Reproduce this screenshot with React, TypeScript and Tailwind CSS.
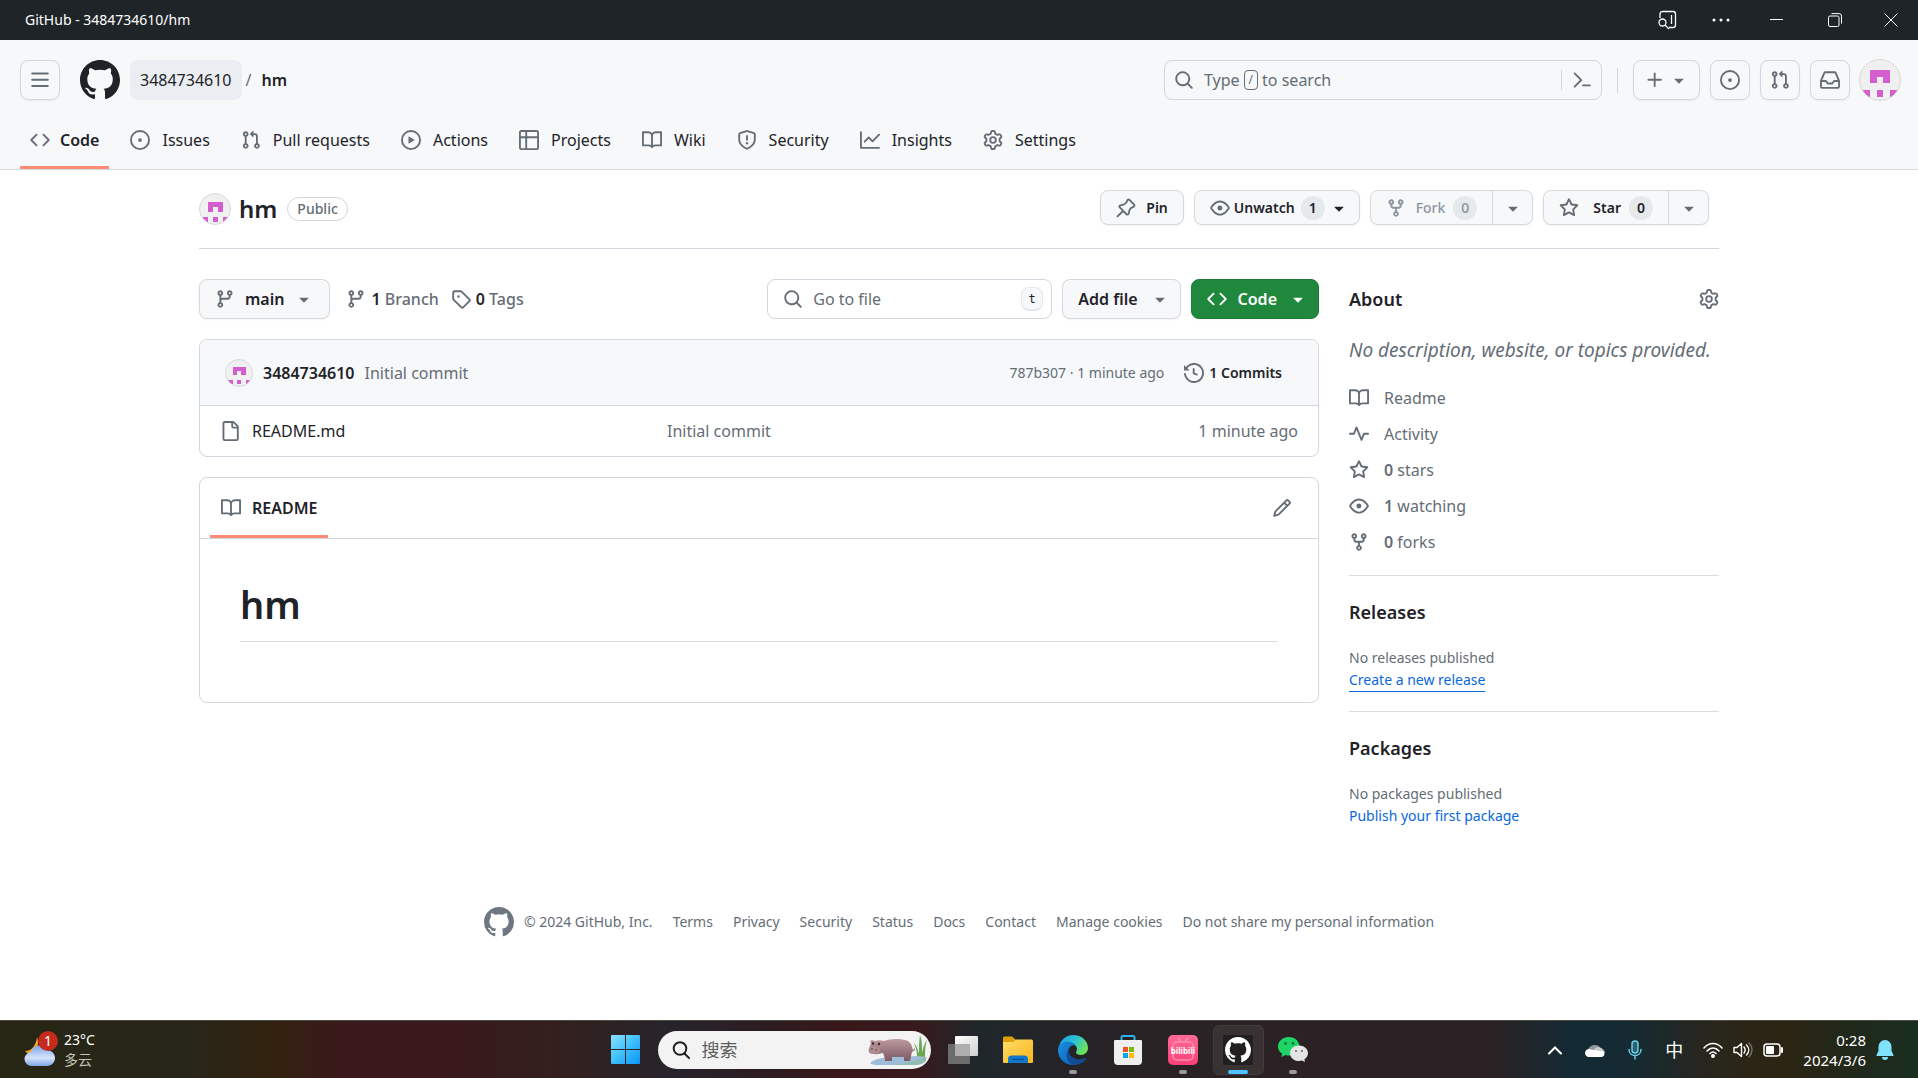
import type { ReactNode } from "react";

// 16px icon set, every path drawn on a 16x16 grid
const ICONS = {
  bars: "M1 2.75A.75.75 0 0 1 1.75 2h12.5a.75.75 0 0 1 0 1.5H1.75A.75.75 0 0 1 1 2.75Zm0 5A.75.75 0 0 1 1.75 7h12.5a.75.75 0 0 1 0 1.5H1.75A.75.75 0 0 1 1 7.75ZM1.75 12h12.5a.75.75 0 0 1 0 1.5H1.75a.75.75 0 0 1 0-1.5Z",
  github:
    "M8 0c4.42 0 8 3.58 8 8a8.013 8.013 0 0 1-5.45 7.59c-.4.08-.55-.17-.55-.38 0-.27.01-1.13.01-2.2 0-.75-.25-1.23-.54-1.48 1.78-.2 3.65-.88 3.65-3.95 0-.88-.31-1.59-.82-2.15.08-.2.36-1.02-.08-2.12 0 0-.67-.22-2.2.82-.64-.18-1.32-.27-2-.27-.68 0-1.36.09-2 .27-1.53-1.03-2.2-.82-2.2-.82-.44 1.1-.16 1.92-.08 2.12-.51.56-.82 1.28-.82 2.15 0 3.06 1.86 3.75 3.64 3.95-.23.2-.44.55-.51 1.07-.46.21-1.61.55-2.33-.66-.15-.24-.6-.83-1.23-.82-.67.01-.27.38.01.53.34.19.73.9.82 1.13.16.45.68 1.31 2.69.94 0 .67.01 1.3.01 1.49 0 .21-.15.45-.55.38A7.995 7.995 0 0 1 0 8c0-4.42 3.58-8 8-8Z",
  code: "m11.28 3.22 4.25 4.25a.75.75 0 0 1 0 1.06l-4.25 4.25a.749.749 0 0 1-1.275-.326.749.749 0 0 1 .215-.734L13.94 8l-3.72-3.72a.749.749 0 0 1 .326-1.275.749.749 0 0 1 .734.215Zm-6.56 0a.751.751 0 0 1 1.042.018.751.751 0 0 1 .018 1.042L2.06 8l3.72 3.72a.749.749 0 0 1-.326 1.275.749.749 0 0 1-.734-.215L.47 8.53a.75.75 0 0 1 0-1.06Z",
  issue:
    "M8 9.5a1.5 1.5 0 1 0 0-3 1.5 1.5 0 0 0 0 3ZM8 0a8 8 0 1 1 0 16A8 8 0 0 1 8 0ZM1.5 8a6.5 6.5 0 1 0 13 0 6.5 6.5 0 0 0-13 0Z",
  pull: "M1.5 3.25a2.25 2.25 0 1 1 3 2.122v5.256a2.251 2.251 0 1 1-1.5 0V5.372A2.25 2.25 0 0 1 1.5 3.25Zm5.677-.177L9.573.677A.25.25 0 0 1 10 .854V2.5h1A2.5 2.5 0 0 1 13.5 5v5.628a2.251 2.251 0 1 1-1.5 0V5a1 1 0 0 0-1-1h-1v1.646a.25.25 0 0 1-.427.177L7.177 3.427a.25.25 0 0 1 0-.354ZM3.75 2.5a.75.75 0 1 0 0 1.5.75.75 0 0 0 0-1.5Zm0 9.5a.75.75 0 1 0 0 1.5.75.75 0 0 0 0-1.5Zm8.25.75a.75.75 0 1 0 1.5 0 .75.75 0 0 0-1.5 0Z",
  play: "M8 0a8 8 0 1 1 0 16A8 8 0 0 1 8 0ZM1.5 8a6.5 6.5 0 1 0 13 0 6.5 6.5 0 0 0-13 0Zm4.879-2.773 4.264 2.559a.25.25 0 0 1 0 .428l-4.264 2.559A.25.25 0 0 1 6 10.559V5.442a.25.25 0 0 1 .379-.215Z",
  table:
    "M0 1.75C0 .784.784 0 1.75 0h12.5C15.216 0 16 .784 16 1.75v12.5A1.75 1.75 0 0 1 14.25 16H1.75A1.75 1.75 0 0 1 0 14.25ZM6.5 6.5v8h7.75a.25.25 0 0 0 .25-.25V6.5Zm8-1.5V1.75a.25.25 0 0 0-.25-.25H6.5V5Zm-13 1.5v7.75c0 .138.112.25.25.25H5v-8ZM5 5V1.5H1.75a.25.25 0 0 0-.25.25V5Z",
  book: "M0 1.75A.75.75 0 0 1 .75 1h4.253c1.227 0 2.317.59 3 1.501A3.743 3.743 0 0 1 11.006 1h4.245a.75.75 0 0 1 .75.75v10.5a.75.75 0 0 1-.75.75h-4.507a2.25 2.25 0 0 0-1.591.659l-.622.621a.75.75 0 0 1-1.06 0l-.622-.621A2.25 2.25 0 0 0 5.258 13H.75a.75.75 0 0 1-.75-.75Zm7.251 10.324.004-5.073-.002-2.253A2.25 2.25 0 0 0 5.003 2.5H1.5v9h3.757a3.75 3.75 0 0 1 1.994.574ZM8.755 4.75l-.004 7.322a3.752 3.752 0 0 1 1.992-.572H14.5v-9h-3.495a2.25 2.25 0 0 0-2.25 2.25Z",
  shield:
    "M7.467.133a1.748 1.748 0 0 1 1.066 0l5.25 1.68A1.75 1.75 0 0 1 15 3.48V7c0 1.566-.32 3.182-1.303 4.682-.983 1.498-2.585 2.813-5.032 3.855a1.697 1.697 0 0 1-1.33 0c-2.447-1.042-4.049-2.357-5.032-3.855C1.32 10.182 1 8.566 1 7V3.48a1.75 1.75 0 0 1 1.217-1.667Zm.61 1.429a.25.25 0 0 0-.153 0l-5.25 1.68a.25.25 0 0 0-.174.238V7c0 1.358.275 2.666 1.057 3.86.784 1.194 2.121 2.34 4.366 3.297a.196.196 0 0 0 .154 0c2.245-.956 3.582-2.104 4.366-3.298C13.225 9.666 13.5 8.36 13.5 7V3.48a.251.251 0 0 0-.174-.237l-5.25-1.68ZM8.75 4.75v3a.75.75 0 0 1-1.5 0v-3a.75.75 0 0 1 1.5 0ZM9 10.5a1 1 0 1 1-2 0 1 1 0 0 1 2 0Z",
  graph:
    "M1.5 1.75V13.5h13.75a.75.75 0 0 1 0 1.5H.75a.75.75 0 0 1-.75-.75V1.75a.75.75 0 0 1 1.5 0Zm14.28 2.53-5.25 5.25a.75.75 0 0 1-1.06 0L7 7.06 4.28 9.78a.751.751 0 0 1-1.042-.018.751.751 0 0 1-.018-1.042l3.25-3.25a.75.75 0 0 1 1.06 0L10 7.94l4.72-4.72a.751.751 0 0 1 1.042.018.751.751 0 0 1 .018 1.042Z",
  gear: "M8 0a8.2 8.2 0 0 1 .701.031C9.444.095 9.99.645 10.16 1.29l.288 1.107c.018.066.079.158.212.224.231.114.454.243.668.386.123.082.233.09.299.071l1.103-.303c.644-.176 1.392.021 1.82.63.27.385.506.792.704 1.218.315.675.111 1.422-.364 1.891l-.814.806c-.049.048-.098.147-.088.294.016.257.016.515 0 .772-.01.147.038.246.088.294l.814.806c.475.469.679 1.216.364 1.891a7.977 7.977 0 0 1-.704 1.217c-.428.61-1.176.807-1.82.63l-1.102-.302c-.067-.019-.177-.011-.3.071a5.909 5.909 0 0 1-.668.386c-.133.066-.194.158-.211.224l-.29 1.106c-.168.646-.715 1.196-1.458 1.26a8.006 8.006 0 0 1-1.402 0c-.743-.064-1.289-.614-1.458-1.26l-.289-1.106c-.018-.066-.079-.158-.212-.224a5.738 5.738 0 0 1-.668-.386c-.123-.082-.233-.09-.299-.071l-1.103.303c-.644.176-1.392-.021-1.82-.63a8.12 8.12 0 0 1-.704-1.218c-.315-.675-.111-1.422.363-1.891l.815-.806c.05-.048.098-.147.088-.294a6.214 6.214 0 0 1 0-.772c.01-.147-.038-.246-.088-.294l-.815-.806C.635 6.045.431 5.298.746 4.623a7.92 7.92 0 0 1 .704-1.217c.428-.61 1.176-.807 1.82-.63l1.102.302c.067.019.177.011.3-.071.214-.143.437-.272.668-.386.133-.066.194-.158.211-.224l.29-1.106C6.009.645 6.556.095 7.299.03 7.53.01 7.764 0 8 0Zm-.571 1.525c-.036.003-.108.036-.137.146l-.289 1.105c-.147.561-.549.967-.998 1.189-.173.086-.34.183-.5.29-.417.278-.97.423-1.529.27l-1.103-.303c-.109-.03-.175.016-.195.045-.22.312-.412.644-.573.99-.014.031-.021.11.059.19l.815.806c.411.406.562.957.53 1.456a4.709 4.709 0 0 0 0 .582c.032.499-.119 1.05-.53 1.456l-.815.806c-.081.08-.073.159-.059.19.162.346.353.677.573.989.02.03.085.076.195.046l1.102-.303c.56-.153 1.113-.008 1.53.27.161.107.328.204.501.29.447.222.85.629.997 1.189l.289 1.105c.029.109.101.143.137.146a6.6 6.6 0 0 0 1.142 0c.036-.003.108-.036.137-.146l.289-1.105c.147-.561.549-.967.998-1.189.173-.086.34-.183.5-.29.417-.278.97-.423 1.529-.27l1.103.303c.109.029.175-.016.195-.045.22-.313.411-.644.573-.99.014-.031.021-.11-.059-.19l-.815-.806c-.411-.406-.562-.957-.53-1.456a4.709 4.709 0 0 0 0-.582c-.032-.499.119-1.05.53-1.456l.815-.806c.081-.08.073-.159.059-.19a6.464 6.464 0 0 0-.573-.989c-.02-.03-.085-.076-.195-.046l-1.102.303c-.56.153-1.113.008-1.53-.27a4.44 4.44 0 0 0-.501-.29c-.447-.222-.85-.629-.997-1.189l-.289-1.105c-.029-.11-.101-.143-.137-.146a6.6 6.6 0 0 0-1.142 0ZM11 8a3 3 0 1 1-6 0 3 3 0 0 1 6 0ZM9.5 8a1.5 1.5 0 1 0-3.001.001A1.5 1.5 0 0 0 9.5 8Z",
  search:
    "M10.68 11.74a6 6 0 0 1-7.922-8.982 6 6 0 0 1 8.982 7.922l3.04 3.04a.749.749 0 0 1-.326 1.275.749.749 0 0 1-.734-.215ZM11.5 7a4.499 4.499 0 1 0-8.997 0A4.499 4.499 0 0 0 11.5 7Z",
  caret: "m4.427 7.427 3.396 3.396a.25.25 0 0 0 .354 0l3.396-3.396A.25.25 0 0 0 11.396 7H4.604a.25.25 0 0 0-.177.427Z",
  plus: "M7.75 2a.75.75 0 0 1 .75.75V7h4.25a.75.75 0 0 1 0 1.5H8.5v4.25a.75.75 0 0 1-1.5 0V8.5H2.75a.75.75 0 0 1 0-1.5H7V2.75A.75.75 0 0 1 7.75 2Z",
  inbox:
    "M2.8 2.06A1.75 1.75 0 0 1 4.41 1h7.18c.7 0 1.333.417 1.61 1.06l2.74 6.395c.04.093.06.194.06.295v4.5A1.75 1.75 0 0 1 14.25 15H1.75A1.75 1.75 0 0 1 0 13.25v-4.5c0-.101.02-.202.06-.295Zm1.61.44a.25.25 0 0 0-.23.152L1.887 8H4.75a.75.75 0 0 1 .6.3L6.625 10h2.75l1.275-1.7a.75.75 0 0 1 .6-.3h2.863L11.82 2.652a.25.25 0 0 0-.23-.152Zm10.09 7h-2.875l-1.275 1.7a.75.75 0 0 1-.6.3h-3.5a.75.75 0 0 1-.6-.3L4.375 9.5H1.5v3.75c0 .138.112.25.25.25h12.5a.25.25 0 0 0 .25-.25Z",
  command:
    "m6.354 8.04-4.773 4.773a.75.75 0 1 0 1.061 1.06L7.945 8.57a.75.75 0 0 0 0-1.06L2.642 2.206a.75.75 0 0 0-1.06 1.061L6.353 8.04ZM8.75 11.5a.75.75 0 0 0 0 1.5h5.5a.75.75 0 0 0 0-1.5h-5.5Z",
  pin: "m11.294.984 3.722 3.722a1.75 1.75 0 0 1-.504 2.826l-1.327.613a3.089 3.089 0 0 0-1.707 2.084l-.584 2.454c-.317 1.332-1.972 1.8-2.94.832L5.75 11.311 1.78 15.28a.749.749 0 1 1-1.06-1.06l3.969-3.97-2.204-2.204c-.968-.968-.5-2.623.832-2.94l2.454-.584a3.08 3.08 0 0 0 2.084-1.707l.613-1.327a1.75 1.75 0 0 1 2.826-.504ZM6.283 9.723l2.732 2.731a.25.25 0 0 0 .42-.119l.584-2.454a4.586 4.586 0 0 1 2.537-3.098l1.328-.613a.25.25 0 0 0 .072-.404l-3.722-3.722a.25.25 0 0 0-.404.072l-.613 1.328a4.584 4.584 0 0 1-3.098 2.537l-2.454.584a.25.25 0 0 0-.119.42l2.731 2.732Z",
  eye: "M8 2c1.981 0 3.671.992 4.933 2.078 1.27 1.091 2.187 2.345 2.637 3.023a1.62 1.62 0 0 1 0 1.798c-.45.678-1.367 1.932-2.637 3.023C11.67 13.008 9.981 14 8 14c-1.981 0-3.671-.992-4.933-2.078C1.797 10.83.88 9.576.43 8.898a1.62 1.62 0 0 1 0-1.798c.45-.677 1.367-1.931 2.637-3.022C4.33 2.992 6.019 2 8 2ZM1.679 7.932a.12.12 0 0 0 0 .136c.411.622 1.241 1.75 2.366 2.717C5.176 11.758 6.527 12.5 8 12.5c1.473 0 2.825-.742 3.955-1.715 1.124-.967 1.954-2.096 2.366-2.717a.12.12 0 0 0 0-.136c-.412-.621-1.242-1.75-2.366-2.717C10.824 4.242 9.473 3.5 8 3.5c-1.473 0-2.825.742-3.955 1.715-1.124.967-1.954 2.096-2.366 2.717ZM8 10a2 2 0 1 1-.001-3.999A2 2 0 0 1 8 10Z",
  fork: "M5 5.372v.878c0 .414.336.75.75.75h4.5a.75.75 0 0 0 .75-.75v-.878a2.25 2.25 0 1 1 1.5 0v.878a2.25 2.25 0 0 1-2.25 2.25h-1.5v2.128a2.251 2.251 0 1 1-1.5 0V8.5h-1.5A2.25 2.25 0 0 1 3.5 6.25v-.878a2.25 2.25 0 1 1 1.5 0ZM5 3.25a.75.75 0 1 0-1.5 0 .75.75 0 0 0 1.5 0Zm6.75.75a.75.75 0 1 0 0-1.5.75.75 0 0 0 0 1.5Zm-3 8.75a.75.75 0 1 0-1.5 0 .75.75 0 0 0 1.5 0Z",
  star: "M8 .25a.75.75 0 0 1 .673.418l1.882 3.815 4.21.612a.75.75 0 0 1 .416 1.279l-3.046 2.97.719 4.192a.751.751 0 0 1-1.088.791L8 12.347l-3.766 1.98a.75.75 0 0 1-1.088-.79l.72-4.194L.818 6.374a.75.75 0 0 1 .416-1.28l4.21-.611L7.327.668A.75.75 0 0 1 8 .25Zm0 2.445L6.615 5.5a.75.75 0 0 1-.564.41l-3.097.45 2.24 2.184a.75.75 0 0 1 .216.664l-.528 3.084 2.769-1.456a.75.75 0 0 1 .698 0l2.77 1.456-.53-3.084a.75.75 0 0 1 .216-.664l2.24-2.183-3.096-.45a.75.75 0 0 1-.564-.41L8 2.694Z",
  branch:
    "M9.5 3.25a2.25 2.25 0 1 1 3 2.122V6A2.5 2.5 0 0 1 10 8.5H6a1 1 0 0 0-1 1v1.128a2.251 2.251 0 1 1-1.5 0V5.372a2.25 2.25 0 1 1 1.5 0v1.836A2.493 2.493 0 0 1 6 7h4a1 1 0 0 0 1-1v-.628A2.25 2.25 0 0 1 9.5 3.25Zm-6 0a.75.75 0 1 0 1.5 0 .75.75 0 0 0-1.5 0Zm8.25-.75a.75.75 0 1 0 0 1.5.75.75 0 0 0 0-1.5ZM4.25 12a.75.75 0 1 0 0 1.5.75.75 0 0 0 0-1.5Z",
  tag: "M1 7.775V2.75C1 1.784 1.784 1 2.75 1h5.025c.464 0 .91.184 1.238.513l6.25 6.25a1.75 1.75 0 0 1 0 2.474l-5.026 5.026a1.75 1.75 0 0 1-2.474 0l-6.25-6.25A1.752 1.752 0 0 1 1 7.775Zm1.5 0c0 .066.026.13.073.177l6.25 6.25a.25.25 0 0 0 .354 0l5.025-5.025a.25.25 0 0 0 0-.354l-6.25-6.25a.25.25 0 0 0-.177-.073H2.75a.25.25 0 0 0-.25.25ZM6 5a1 1 0 1 1 0 2 1 1 0 0 1 0-2Z",
  history:
    "m.427 1.927 1.215 1.215a8.002 8.002 0 1 1-1.6 5.685.75.75 0 1 1 1.493-.154 6.5 6.5 0 1 0 1.18-4.458l1.358 1.358A.25.25 0 0 1 3.896 6H.25A.25.25 0 0 1 0 5.75V2.104a.25.25 0 0 1 .427-.177ZM7.75 4a.75.75 0 0 1 .75.75v2.992l2.028.812a.75.75 0 0 1-.557 1.392l-2.5-1A.751.751 0 0 1 7 8.25v-3.5A.75.75 0 0 1 7.75 4Z",
  file: "M2 1.75C2 .784 2.784 0 3.75 0h6.586c.464 0 .909.184 1.237.513l2.914 2.914c.329.328.513.773.513 1.237v9.586A1.75 1.75 0 0 1 13.25 16h-9.5A1.75 1.75 0 0 1 2 14.25Zm1.75-.25a.25.25 0 0 0-.25.25v12.5c0 .138.112.25.25.25h9.5a.25.25 0 0 0 .25-.25V6h-2.75A1.75 1.75 0 0 1 9 4.25V1.5Zm6.75.062V4.25c0 .138.112.25.25.25h2.688l-.011-.013-2.914-2.914-.013-.011Z",
  pencil:
    "M11.013 1.427a1.75 1.75 0 0 1 2.474 0l1.086 1.086a1.75 1.75 0 0 1 0 2.474l-8.61 8.61c-.21.21-.47.364-.756.445l-3.251.93a.75.75 0 0 1-.927-.928l.929-3.25c.081-.286.235-.547.445-.758l8.61-8.61Zm.176 4.823L9.75 4.81l-6.286 6.287a.253.253 0 0 0-.064.108l-.558 1.953 1.953-.558a.253.253 0 0 0 .108-.064Zm1.238-3.763a.25.25 0 0 0-.354 0L10.811 3.75l1.439 1.44 1.263-1.263a.25.25 0 0 0 0-.354Z",
  pulse:
    "M6 2c.306 0 .582.187.696.471L10 10.731l1.304-3.26A.751.751 0 0 1 12 7h3.25a.75.75 0 0 1 0 1.5h-2.742l-1.812 4.528a.751.751 0 0 1-1.392 0L6 4.77 4.696 8.03A.75.75 0 0 1 4 8.5H.75a.75.75 0 0 1 0-1.5h2.742l1.812-4.529A.751.751 0 0 1 6 2Z",
};

type IconName = keyof typeof ICONS;

function Icon({ name, className = "size-5" }: { name: IconName; className?: string }) {
  return (
    <svg viewBox="0 0 16 16" fill="currentColor" aria-hidden="true" className={`shrink-0 ${className}`}>
      <path d={ICONS[name]} />
    </svg>
  );
}

function Avatar({ className }: { className: string }) {
  return (
    <svg
      viewBox="0 0 12 12"
      aria-hidden="true"
      className={`shrink-0 rounded-full border border-[#d8dade] bg-[#f0f0f0] ${className}`}
    >
      <path
        fill="#d25fcd"
        shapeRendering="crispEdges"
        d="M3 3h6v4H7V5H5v2H3zM1 9h2v2H1zM5 9h2v2H5zM9 9h2v2H9z"
      />
    </svg>
  );
}

const NAV: { icon: IconName; label: string }[] = [
  { icon: "code", label: "Code" },
  { icon: "issue", label: "Issues" },
  { icon: "pull", label: "Pull requests" },
  { icon: "play", label: "Actions" },
  { icon: "table", label: "Projects" },
  { icon: "book", label: "Wiki" },
  { icon: "shield", label: "Security" },
  { icon: "graph", label: "Insights" },
  { icon: "gear", label: "Settings" },
];

const FOOTER_LINKS = [
  "Terms",
  "Privacy",
  "Security",
  "Status",
  "Docs",
  "Contact",
  "Manage cookies",
  "Do not share my personal information",
];

export default function App() {
  return (
    <div className="flex min-h-screen flex-col bg-white font-['Noto_Sans','Noto_Sans_CJK_SC',sans-serif] text-base text-[#1f2328]">
      <TitleBar />
      <Header />
      <main className="mx-auto w-full max-w-[1600px] px-10">
        <RepoTitle />
        <div className="mt-[30px] flex gap-[30px]">
          <div className="min-w-0 flex-1">
            <Toolbar />
            <FileList />
            <Readme />
          </div>
          <Sidebar />
        </div>
      </main>
      <footer className="mt-20 mb-16 flex items-center justify-center gap-5 text-sm text-[#656d76]">
        <div className="flex items-center gap-[10px]">
          <Icon name="github" className="size-[30px] text-[#6e7781]" />
          <span>© 2024 GitHub, Inc.</span>
        </div>
        {FOOTER_LINKS.map((link) => (
          <a key={link} href="#">
            {link}
          </a>
        ))}
      </footer>
      <Taskbar />
    </div>
  );
}

function TitleBar() {
  return (
    <div className="flex h-10 items-center justify-between bg-[#1f2428] pl-[25px] text-white">
      <span className="text-sm">GitHub - 3484734610/hm</span>
      <div className="flex items-center">
        <button aria-label="Search in page" className="flex w-[54px] justify-center">
          <svg viewBox="0 0 20 20" className="size-5" fill="none" stroke="currentColor" strokeWidth="1.3">
            <path d="M3 8V3.5A2.5 2.5 0 0 1 5.500 1.500H16A2.500 2.500 0 0 1 18.500 4v11A2.500 2.500 0 0 1 16 17.500h-4M14.500 5v9" />
            <circle cx="5.500" cy="12.500" r="3.500" />
            <path d="m8 15 4 4" />
          </svg>
        </button>
        <button aria-label="More" className="flex w-[54px] justify-center">
          <svg viewBox="0 0 20 20" className="size-5" fill="currentColor">
            <circle cx="3" cy="10" r="1.500" />
            <circle cx="10" cy="10" r="1.500" />
            <circle cx="17" cy="10" r="1.500" />
          </svg>
        </button>
        <button aria-label="Minimize" className="flex w-[58px] justify-center">
          <svg viewBox="0 0 14 14" className="size-[14px]" stroke="currentColor">
            <path d="M0 6.500h13" />
          </svg>
        </button>
        <button aria-label="Restore" className="flex w-[58px] justify-center">
          <svg viewBox="0 0 14 14" className="size-[14px]" fill="none" stroke="currentColor">
            <rect x="0.500" y="3" width="10.500" height="10.500" rx="1.500" />
            <path d="M3.500.600h7.500a2.500 2.500 0 0 1 2.500 2.500v7.500" />
          </svg>
        </button>
        <button aria-label="Close" className="flex w-[54px] justify-center">
          <svg viewBox="0 0 14 14" className="size-[14px]" stroke="currentColor">
            <path d="m.500.500 13 13M13.500.500l-13 13" />
          </svg>
        </button>
      </div>
    </div>
  );
}

function IconButton({ icon, label }: { icon: IconName; label: string }) {
  return (
    <button
      aria-label={label}
      className="flex size-10 items-center justify-center rounded-lg border border-[#d0d7de] text-[#656d76] shadow-xs"
    >
      <Icon name={icon} />
    </button>
  );
}

function Header() {
  return (
    <header className="border-b border-[#d4d9df] bg-[#f6f8fa]">
      <div className="flex items-center justify-between pt-[19px] pr-[17px] pl-5">
        <div className="flex items-center">
          <IconButton icon="bars" label="Open menu" />
          <a href="#" aria-label="Homepage" className="ml-5">
            <Icon name="github" className="size-10" />
          </a>
          <a href="#" className="ml-[10px] flex h-10 items-center rounded-lg bg-[#eaedf1] px-[10px]">
            3484734610
          </a>
          <span className="ml-1 text-[#656d76]">/</span>
          <a href="#" className="ml-[10px] font-semibold">
            hm
          </a>
        </div>
        <div className="flex items-center">
          <div className="flex h-10 w-[438px] items-center rounded-lg border border-[#d0d7de] pl-[9px] text-[#656d76]">
            <button className="flex flex-1 items-center gap-[10px]">
              <Icon name="search" />
              <span className="flex items-center gap-1">
                Type
                <kbd className="rounded border border-[#656d76] px-1 font-[inherit] text-xs leading-[18px]">/</kbd>
                to search
              </span>
            </button>
            <button aria-label="Command palette" className="flex h-5 w-10 items-center justify-center border-l border-[#d0d7de]">
              <Icon name="command" />
            </button>
          </div>
          <div className="mx-[15px] h-[25px] w-px bg-[#d0d7de]" />
          <button
            aria-label="Create new"
            className="mr-[10px] flex h-10 w-[67px] items-center justify-center gap-1 rounded-lg border border-[#d0d7de] text-[#656d76] shadow-xs"
          >
            <Icon name="plus" />
            <Icon name="caret" />
          </button>
          <div className="flex gap-[10px]">
            <IconButton icon="issue" label="Issues" />
            <IconButton icon="pull" label="Pull requests" />
            <IconButton icon="inbox" label="Notifications" />
          </div>
          <button aria-label="User menu" className="ml-[9px]">
            <Avatar className="size-[42px]" />
          </button>
        </div>
      </div>
      <nav className="flex gap-[11px] px-5 pt-3">
        {NAV.map((item, i) => (
          <a
            key={item.label}
            href="#"
            className={`flex h-14 items-center border-b-3 px-[10px] ${
              i === 0 ? "gap-[10px] border-[#fd8c73] font-semibold" : "gap-3 border-transparent"
            }`}
          >
            <Icon name={item.icon} className="size-5 text-[#656d76]" />
            {item.label}
          </a>
        ))}
      </nav>
    </header>
  );
}

function Counter({ children }: { children: ReactNode }) {
  return (
    <span className="flex h-6 min-w-6 items-center justify-center rounded-full bg-[#e6e9eb]">{children}</span>
  );
}

function RepoTitle() {
  const box = "flex h-[35px] items-center rounded-lg border border-[#d5d8dc] bg-[#f6f8fa] shadow-xs";
  return (
    <div className="flex items-start justify-between border-b border-[#d0d7de] pt-5 pr-[10px] pb-5">
      <div className="flex h-[38px] items-center">
        <Avatar className="size-8" />
        <h1 className="ml-2 text-2xl leading-8 font-semibold">hm</h1>
        <span className="ml-[10px] rounded-full border border-[#d0d7de] px-[9px] text-sm leading-[22px] font-medium text-[#656d76]">
          Public
        </span>
      </div>
      <div className="flex gap-[10px] text-sm font-semibold">
        <button className={`${box} gap-[10px] px-[15px]`}>
          <Icon name="pin" className="size-5 text-[#656d76]" />
          Pin
        </button>
        <button className={`${box} pr-[10px] pl-[15px]`}>
          <Icon name="eye" className="mr-1 size-5 text-[#656d76]" />
          <span className="mr-[6px]">Unwatch</span>
          <Counter>1</Counter>
          <Icon name="caret" className="ml-1 size-5" />
        </button>
        <div className={`${box} text-[#8c959f]`}>
          <button disabled className="flex items-center px-[15px] font-medium">
            <Icon name="fork" className="mr-[10px] size-5" />
            <span className="mr-2">Fork</span>
            <Counter>0</Counter>
          </button>
          <CaretCell label="Fork options" />
        </div>
        <div className={box}>
          <button className="flex items-center px-[15px]">
            <Icon name="star" className="mr-[14px] size-5 text-[#656d76]" />
            <span className="mr-2">Star</span>
            <Counter>0</Counter>
          </button>
          <CaretCell label="Star options" />
        </div>
      </div>
    </div>
  );
}

function CaretCell({ label }: { label: string }) {
  return (
    <button aria-label={label} className="flex h-full w-10 items-center justify-center border-l border-[#d5d8dc] text-[#656d76]">
      <Icon name="caret" />
    </button>
  );
}

function Toolbar() {
  return (
    <div className="flex h-10 items-center justify-between">
      <div className="flex items-center">
        <button className="flex h-10 items-center rounded-lg border border-[#d5d8dc] bg-[#f6f8fa] px-[15px] font-semibold shadow-xs">
          <Icon name="branch" className="mr-[10px] size-5 text-[#656d76]" />
          main
          <Icon name="caret" className="ml-[10px] size-5 text-[#656d76]" />
        </button>
        <a href="#" className="ml-4 flex items-center gap-[5px] font-medium text-[#656d76]">
          <Icon name="branch" />
          <span>
            <strong className="font-semibold text-[#1f2328]">1</strong> Branch
          </span>
        </a>
        <a href="#" className="ml-3 flex items-center gap-[5px] font-medium text-[#656d76]">
          <Icon name="tag" />
          <span>
            <strong className="font-semibold text-[#1f2328]">0</strong> Tags
          </span>
        </a>
      </div>
      <div className="flex gap-[10px]">
        <label className="flex h-10 w-[285px] items-center rounded-lg border border-[#d0d7de] pr-2 pl-[15px] text-[#656d76]">
          <Icon name="search" />
          <input
            aria-label="Go to file"
            placeholder="Go to file"
            className="mx-[10px] min-w-0 flex-1 outline-none placeholder:text-[#656d76]"
          />
          <kbd className="flex h-6 w-[22px] items-center justify-center rounded-lg border border-b-2 border-[#e4e8ec] bg-[#f6f8fa] font-['DejaVu_Sans_Mono',monospace] text-xs text-[#1f2328]">
            t
          </kbd>
        </label>
        <button className="flex h-10 items-center gap-3 rounded-lg border border-[#d5d8dc] bg-[#f6f8fa] pr-[10px] pl-[15px] font-semibold shadow-xs">
          Add file
          <Icon name="caret" className="size-5 text-[#656d76]" />
        </button>
        <button className="flex h-10 items-center gap-[11px] rounded-lg border border-[#1f7b38] bg-[#1f883d] pr-[10px] pl-[15px] font-semibold text-white shadow-xs">
          <Icon name="code" />
          Code
          <Icon name="caret" />
        </button>
      </div>
    </div>
  );
}

function FileList() {
  return (
    <section className="mt-5 overflow-hidden rounded-lg border border-[#d0d7de]">
      <div className="flex h-[66px] items-center justify-between border-b border-[#d0d7de] bg-[#f6f8fa] pr-9 pl-[25px]">
        <div className="flex items-center gap-[10px]">
          <Avatar className="size-7" />
          <a href="#" className="font-semibold">
            3484734610
          </a>
          <a href="#" className="text-[#656d76]">
            Initial commit
          </a>
        </div>
        <div className="flex items-center gap-5 text-sm">
          <span className="text-[#656d76]">787b307 · 1 minute ago</span>
          <a href="#" className="flex items-center gap-[5px] font-semibold">
            <Icon name="history" className="size-5 text-[#656d76]" />1 Commits
          </a>
        </div>
      </div>
      <table className="w-full table-fixed text-left text-[#656d76]">
        <tbody>
          <tr className="h-[50px]">
            <td className="w-[467px] pl-5">
              <a href="#" className="flex items-center gap-3 text-[#1f2328]">
                <Icon name="file" className="size-5 text-[#656d76]" />
                README.md
              </a>
            </td>
            <td>Initial commit</td>
            <td className="w-[170px] pr-5 text-right">1 minute ago</td>
          </tr>
        </tbody>
      </table>
    </section>
  );
}

function Readme() {
  return (
    <section className="mt-5 rounded-lg border border-[#d0d7de]">
      <div className="flex h-[61px] items-center justify-between border-b border-[#d0d7de] pr-[26px] pl-[10px]">
        <a
          href="#"
          className="flex h-full items-center gap-[11px] border-b-3 border-[#fd8c73] px-[11px] pt-[3px] font-semibold"
        >
          <Icon name="book" className="size-5 text-[#656d76]" />
          README
        </a>
        <button aria-label="Edit file" className="text-[#656d76]">
          <Icon name="pencil" />
        </button>
      </div>
      <article className="px-10 pt-10 pb-[60px]">
        <h2 className="border-b border-[#d8dee4] pb-3 text-[38px] leading-[50px] font-semibold">hm</h2>
      </article>
    </section>
  );
}

function Sidebar() {
  const stats: { icon: IconName; count?: string; label: string }[] = [
    { icon: "book", label: "Readme" },
    { icon: "pulse", label: "Activity" },
    { icon: "star", count: "0", label: "stars" },
    { icon: "eye", count: "1", label: "watching" },
    { icon: "fork", count: "0", label: "forks" },
  ];
  return (
    <aside className="w-[370px] shrink-0 text-[#656d76]">
      <div className="flex h-10 items-center justify-between">
        <h2 className="text-lg font-semibold text-[#1f2328]">About</h2>
        <button aria-label="Edit repository details">
          <Icon name="gear" />
        </button>
      </div>
      <p className="mt-4 text-[19px] leading-[30px] whitespace-nowrap italic">
        No description, website, or topics provided.
      </p>
      <ul className="mt-[15px] border-b border-[#d8dee4] pb-[15px]">
        {stats.map((s) => (
          <li key={s.label} className="h-9">
            <a href="#" className="flex h-full items-center gap-[15px]">
              <Icon name={s.icon} />
              <span>
                {s.count && <strong className="font-semibold">{s.count} </strong>}
                {s.label}
              </span>
            </a>
          </li>
        ))}
      </ul>
      <div className="border-b border-[#d8dee4] pt-[23px] pb-[19px] text-sm leading-[22px]">
        <h2 className="mb-[22px] text-lg leading-[26px] font-semibold text-[#1f2328]">Releases</h2>
        <p>No releases published</p>
        <a href="#" className="inline-block border-b border-[#0969da] text-[#0969da]">
          Create a new release
        </a>
      </div>
      <div className="pt-[23px] text-sm leading-[22px]">
        <h2 className="mb-[22px] text-lg leading-[26px] font-semibold text-[#1f2328]">Packages</h2>
        <p>No packages published</p>
        <a href="#" className="text-[#0969da]">
          Publish your first package
        </a>
      </div>
    </aside>
  );
}

function Taskbar() {
  return (
    <div className="mt-auto flex h-[58px] items-center justify-between border-t border-[#4a4c42] bg-[linear-gradient(90deg,#272614_0%,#28261a_10%,#33220f_14%,#3a181b_18%,#3a181b_23%,#33201e_29%,#26242b_35%,#2c1c20_40%,#391719_44%,#371a1d_48%,#1f272b_51%,#262326_56%,#2a2224_64%,#2a2224_78%,#142a34_82%,#152a33_85%,#28261c_89%,#2c2412_93%,#22281a_96%,#1a2e20_100%)] pr-6 pl-6 text-white">
      <button className="flex flex-1 items-center gap-[6px] text-left">
        <Weather />
        <span className="text-sm leading-5">
          23°C
          <br />
          <span className="text-[#c4c4b8]">多云</span>
        </span>
      </button>
      <div className="flex items-center">
        <TaskIcon label="Start">
          <WindowsLogo />
        </TaskIcon>
        <label className="mx-[5px] flex h-[38px] w-[273px] items-center rounded-full bg-[#f3f3f3] pr-[3px] pl-[14px] text-[#5c5c5c]">
          <svg viewBox="0 0 18 18" className="size-[18px] shrink-0" fill="none" stroke="#222" strokeWidth="2">
            <circle cx="8" cy="7.500" r="6.300" />
            <path d="m12.500 12.500 4.500 4.500" strokeLinecap="round" />
          </svg>
          <input aria-label="搜索" placeholder="搜索" className="ml-3 min-w-0 flex-1 text-lg outline-none placeholder:text-[#5c5c5c]" />
          <Hippo />
        </label>
        <TaskIcon label="Task view">
          <TaskViewIcon />
        </TaskIcon>
        <TaskIcon label="File Explorer">
          <FolderIcon />
        </TaskIcon>
        <TaskIcon label="Edge" running>
          <EdgeIcon />
        </TaskIcon>
        <TaskIcon label="Store">
          <StoreIcon />
        </TaskIcon>
        <TaskIcon label="Video" running>
          <BiliIcon />
        </TaskIcon>
        <TaskIcon label="GitHub" active>
          <span className="flex size-[30px] items-center justify-center bg-[#211f20]">
            <Icon name="github" className="size-[26px]" />
          </span>
        </TaskIcon>
        <TaskIcon label="Chat" running>
          <ChatIcon />
        </TaskIcon>
      </div>
      <Tray />
    </div>
  );
}

function TaskIcon({
  label,
  running,
  active,
  children,
}: {
  label: string;
  running?: boolean;
  active?: boolean;
  children: ReactNode;
}) {
  return (
    <button
      aria-label={label}
      className={`relative mx-[2px] flex h-[50px] w-[51px] items-center justify-center rounded-md ${
        active ? "border border-[#403b3c] bg-[#383233]" : ""
      }`}
    >
      {children}
      {running && <span className="absolute bottom-px h-1 w-2 rounded-full bg-[#9b9898]" />}
      {active && <span className="absolute bottom-0 h-1 w-5 rounded-full bg-[#4cc2ff]" />}
    </button>
  );
}

function Weather() {
  return (
    <svg viewBox="0 0 34 40" className="h-10 w-[34px]" aria-hidden="true">
      <defs>
        <linearGradient id="cloud" x1="0" y1="0" x2="0" y2="1">
          <stop offset="0" stopColor="#7fa3e6" />
          <stop offset="0.600" stopColor="#d6e4fb" />
          <stop offset="1" stopColor="#7da3e6" />
        </linearGradient>
      </defs>
      <path d="M13 7c2 6 1 12-3 15-3 2-7 2-9-1 7 0 11-6 12-14Z" fill="#f5a623" />
      <path d="M8 36a7 7 0 0 1-1-14 8 8 0 0 1 15-2 8 8 0 0 1 2 16Z" fill="url(#cloud)" />
      <circle cx="24" cy="11" r="10" fill="#c42b1c" />
      <text x="24" y="16" textAnchor="middle" fontSize="14" fill="#fff">
        1
      </text>
    </svg>
  );
}

function WindowsLogo() {
  return (
    <svg viewBox="0 0 29 29" className="size-[29px]" aria-hidden="true">
      <defs>
        <linearGradient id="win" x1="0" y1="0" x2="29" y2="29" gradientUnits="userSpaceOnUse">
          <stop offset="0" stopColor="#8be3ff" />
          <stop offset="0.500" stopColor="#3fc0fb" />
          <stop offset="1" stopColor="#0a93f8" />
        </linearGradient>
      </defs>
      <path d="M0 1a1 1 0 0 1 1-1h13v14H0zM15 0h13a1 1 0 0 1 1 1v13H15zM0 15h14v14H1a1 1 0 0 1-1-1zM15 15h14v13a1 1 0 0 1-1 1H15z" fill="url(#win)" />
    </svg>
  );
}

function Hippo() {
  return (
    <svg viewBox="0 0 60 32" className="h-8 w-[60px] shrink-0" aria-hidden="true">
      <defs>
        <linearGradient id="hide" x1="0" y1="0" x2="0" y2="1">
          <stop offset="0" stopColor="#bd9a9c" />
          <stop offset="1" stopColor="#7d5a66" />
        </linearGradient>
      </defs>
      <path d="M2 29c4-4 14-6 28-6 12 0 22-2 27 0 3 3-2 7-10 8H14C8 31 4 31 2 29Z" fill="#9dbdd8" />
      <path d="M30 30c10 0 18-4 28-7 2 4-3 8-11 8H30Z" fill="#8fbcae" />
      <path d="M49 22c0-6-2-10-3-13 3 3 4 7 5 11 0-7 0-13 1-19 2 5 2 12 2 18 1-5 2-9 5-13-2 6-2 11-2 17Z" fill="#6aa556" />
      <path d="M16 7c5-2 14-3 21-1 5 1 7 5 8 10l2-2v2l-3 2c-1 3-1 6-2 9h-6v-4H24v4h-7c0-3-1-5-2-8-3 0-5 2-9 1-4 0-6-2-5-5 1-2 1-4 2-6l-1-2 2-1 3 1c3-1 6-1 9 0Z" fill="url(#hide)" />
      <path d="M1 14c2-3 9-2 11 1 1 3-3 5-6 5-4 0-6-2-5-6Z" fill="#b08d90" />
      <circle cx="4" cy="15" r="0.800" fill="#4c3038" />
      <circle cx="8" cy="16" r="0.800" fill="#4c3038" />
      <circle cx="5" cy="9.500" r="1.200" fill="#3b2a30" />
      <circle cx="11" cy="10" r="1.200" fill="#3b2a30" />
    </svg>
  );
}

function TaskViewIcon() {
  return (
    <svg viewBox="0 0 30 28" className="h-7 w-[30px]" aria-hidden="true">
      <defs>
        <linearGradient id="pane" x1="0" y1="0" x2="1" y2="1">
          <stop offset="0" stopColor="#fff" />
          <stop offset="1" stopColor="#cfcfcf" />
        </linearGradient>
      </defs>
      <rect x="7" width="23" height="20" rx="1" fill="url(#pane)" />
      <rect y="8" width="22" height="20" rx="1" fill="#6c6c6c" />
      <rect x="7" y="8" width="15" height="12" fill="#aeaeae" />
    </svg>
  );
}

function FolderIcon() {
  return (
    <svg viewBox="0 0 30 28" className="h-7 w-[30px]" aria-hidden="true">
      <defs>
        <linearGradient id="folder" x1="0" y1="0" x2="1" y2="1">
          <stop offset="0" stopColor="#ffdc6c" />
          <stop offset="1" stopColor="#fbb616" />
        </linearGradient>
      </defs>
      <path d="M0 2a1.500 1.500 0 0 1 1.500-1.500H9L13 4h15v6H0Z" fill="#e0a008" />
      <path d="M0 6h10l3-2.500h15.500A1.500 1.500 0 0 1 30 5v21a1 1 0 0 1-1 1H1a1 1 0 0 1-1-1Z" fill="url(#folder)" />
      <path d="M5 27v-4a3.500 3.500 0 0 1 3.500-3.500h13A3.500 3.500 0 0 1 25 23v4Z" fill="#1177c9" />
      <path d="M9 23.500h12" stroke="#0b4f8f" strokeWidth="1.200" />
    </svg>
  );
}

function EdgeIcon() {
  return (
    <svg viewBox="0 0 30 30" className="size-[30px]" aria-hidden="true">
      <defs>
        <linearGradient id="edge-top" x1="0" y1="0" x2="1" y2="0.500">
          <stop offset="0.100" stopColor="#1f9fe6" />
          <stop offset="0.550" stopColor="#2cc3d4" />
          <stop offset="1" stopColor="#6be05a" />
        </linearGradient>
        <linearGradient id="edge-low" x1="0" y1="0" x2="1" y2="1">
          <stop offset="0" stopColor="#1b8fe0" />
          <stop offset="1" stopColor="#0b60b8" />
        </linearGradient>
      </defs>
      <path d="M1 12C2 5 8 0 15 0c9 0 15 6 15 13 0 4-3 7-7 7-3 0-5-1-5-2.500 0-1 1-1.500 1-3.500 0-3-3-6-8-6-4 0-8 1.500-10 4Z" fill="url(#edge-top)" />
      <path d="M0 15c0-5 4-8.500 9-8.500 4 0 7.500 1.500 9 4.500-4-2-7 1-7.500 4-1 6 2 12 7 14.500-1 .3-2 .5-3 .5C6.500 30 0 23 0 15Z" fill="url(#edge-low)" />
      <path d="M12 12c-2 3-1 8 2 10 4 3 9 3 13 1 1-.5 1.500.3 1 1-3 4-8 6-12 6C9 29 6 18 12 12Z" fill="#114d97" />
    </svg>
  );
}

function StoreIcon() {
  return (
    <svg viewBox="0 0 30 30" className="size-[30px]" aria-hidden="true">
      <path d="M8.500 6V2.500a1.500 1.500 0 0 1 1.500-1.500h10a1.500 1.500 0 0 1 1.500 1.500V6" fill="none" stroke="#2bb3ec" strokeWidth="2" />
      <path d="M1 6a1 1 0 0 1 1-1h26a1 1 0 0 1 1 1v20a4 4 0 0 1-4 4H5a4 4 0 0 1-4-4Z" fill="#efefef" />
      <path d="M10 12h5v5h-5z" fill="#f25022" />
      <path d="M16 12h5v5h-5z" fill="#7fba00" />
      <path d="M10 18h5v5h-5z" fill="#00a4ef" />
      <path d="M16 18h5v5h-5z" fill="#ffb900" />
    </svg>
  );
}

function BiliIcon() {
  return (
    <svg viewBox="0 0 30 30" className="size-[30px]" aria-hidden="true">
      <defs>
        <linearGradient id="bili" x1="0" y1="0" x2="0" y2="1">
          <stop offset="0" stopColor="#ff6a96" />
          <stop offset="1" stopColor="#fb3f78" />
        </linearGradient>
      </defs>
      <rect width="30" height="30" rx="5" fill="url(#bili)" />
      <rect x="5" y="7" width="20" height="18" rx="4" fill="none" stroke="#ff8fb0" strokeWidth="1.500" />
      <path d="m10 3 3 3m7-3-3 3" stroke="#ff8fb0" strokeWidth="1.500" />
      <text x="15" y="19" textAnchor="middle" fontSize="8" fontWeight="700" fill="#fff">
        bilibili
      </text>
    </svg>
  );
}

function ChatIcon() {
  return (
    <svg viewBox="0 0 30 28" className="h-7 w-[30px]" aria-hidden="true">
      <path d="M11 1C5 1 0 5 0 10.500c0 3 1.500 5.500 4 7L3.500 21l4-2c4 1.200 10 .5 13-3.500 3-5 0-14.500-9.500-14.500Z" fill="#1fd366" />
      <circle cx="7.500" cy="7.500" r="1.400" fill="#0b7a38" />
      <circle cx="15" cy="7.500" r="1.400" fill="#0b7a38" />
      <path d="M21 9.500c-5 0-9 3.300-9 7.700s4 7.800 9 7.800c1 0 2-.2 3-.5l3 1.500-.6-2.700c2-1.400 3.600-3.600 3.600-6.100 0-4.400-4-7.700-9-7.700Z" fill="#e4e4e4" />
      <circle cx="18" cy="15" r="1.100" fill="#6d6d6d" />
      <circle cx="24" cy="15" r="1.100" fill="#6d6d6d" />
    </svg>
  );
}

function Tray() {
  return (
    <div className="flex flex-1 items-center justify-end">
      <button aria-label="Show hidden icons" className="mr-[23px]">
        <svg viewBox="0 0 14 10" className="h-[10px] w-[14px]" fill="none" stroke="currentColor" strokeWidth="2" strokeLinecap="round">
          <path d="m1 8.500 6-6 6 6" />
        </svg>
      </button>
      <button aria-label="Cloud storage" className="mr-[23px]">
        <svg viewBox="0 0 20 14" className="h-[14px] w-5">
          <path d="M3 7a7 7 0 0 1 13-1l-8 5Z" fill="#8f979b" />
          <path d="M10 5c5-2 9 1 10 5H8Z" fill="#c8ccce" />
          <path d="M4 14a4 4 0 1 1 2-7.500L18 8.500a3 3 0 0 1-1 5.500Z" fill="#fff" />
        </svg>
      </button>
      <button aria-label="Microphone" className="mr-[23px] text-[#6bd0ea]">
        <svg viewBox="0 0 14 20" className="h-5 w-[14px]" fill="none" stroke="currentColor" strokeWidth="1.500" strokeLinecap="round">
          <rect x="4" y="1" width="6" height="12" rx="3" fill="#2d5f72" />
          <path d="M1 9.500c0 8 12 8 12 0M7 15.500V19" />
        </svg>
      </button>
      <button className="mr-5 text-lg leading-5">中</button>
      <button aria-label="Network, sound and battery" className="mr-5 flex items-center gap-[10px]">
        <svg viewBox="0 0 20 16" className="h-4 w-5" fill="none" stroke="currentColor" strokeWidth="1.600" strokeLinecap="round">
          <path d="M1 6c5-6 13-6 18 0M4 9c3.500-4 8.500-4 12 0M7 11.500c2-2 4-2 6 0" />
          <circle cx="10" cy="14" r="1.200" fill="currentColor" />
        </svg>
        <svg viewBox="0 0 20 16" className="h-4 w-5" fill="none" stroke="currentColor" strokeWidth="1.400" strokeLinecap="round">
          <path d="M1 5.500h3L8.500 1.500v13L4 10.500H1ZM11 5c1.500 2 1.500 4 0 6" strokeLinejoin="round" />
          <path d="M13.500 3c3 3 3 7 0 10" />
          <path d="M16 1c4 4 4 10 0 14" stroke="#77715f" />
        </svg>
        <svg viewBox="0 0 20 14" className="h-[14px] w-5" fill="none" stroke="currentColor" strokeWidth="1.500">
          <rect x="1" y="1" width="16" height="12" rx="3" />
          <rect x="3" y="3" width="8" height="8" rx="1" fill="currentColor" stroke="none" />
          <path d="M19 5v4" strokeWidth="2" strokeLinecap="round" />
        </svg>
      </button>
      <button className="mr-[10px] text-right text-[15px] leading-5">
        0:28
        <br />
        2024/3/6
      </button>
      <button aria-label="Notifications" className="text-[#7fe4fb]">
        <svg viewBox="0 0 18 20" className="h-5 w-[18px]" fill="currentColor">
          <path d="M9 0a6.500 6.500 0 0 0-6.500 6.500V11L.500 15a.700.700 0 0 0 .600 1h15.800a.700.700 0 0 0 .600-1l-2-4V6.500A6.500 6.500 0 0 0 9 0ZM6 17a3 3 0 0 0 6 0Z" />
        </svg>
      </button>
    </div>
  );
}
